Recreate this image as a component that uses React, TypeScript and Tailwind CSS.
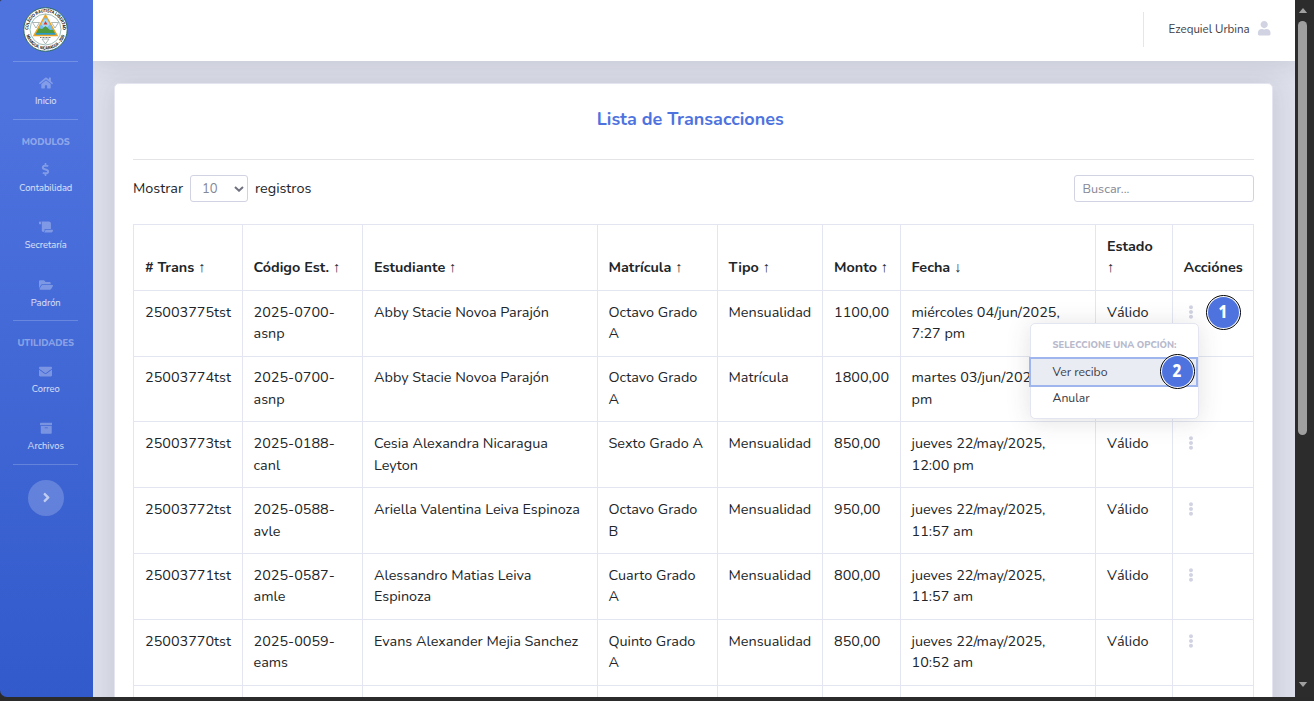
import React from "react";
import {
  FaHome,
  FaDollarSign,
  FaScroll,
  FaFolderOpen,
  FaEnvelope,
  FaArchive,
  FaAngleRight,
  FaUser,
  FaEllipsisV,
} from "react-icons/fa";

type Row = {
  id: string;
  code: [string, string];
  student: string[];
  grade: string[];
  type: string;
  amount: string;
  date: string[];
  height: string;
  text: string;
};

const rows: Row[] = [
  { id: "25003775tst", code: ["2025-0700-", "asnp"], student: ["Abby Stacie Novoa Parajón"], grade: ["Octavo Grado", "A"], type: "Mensualidad", amount: "1100,00", date: ["miércoles 04/jun/2025,", "7:27 pm"], height: "h-[66px]", text: "pt-[11px] leading-[21px]" },
  { id: "25003774tst", code: ["2025-0700-", "asnp"], student: ["Abby Stacie Novoa Parajón"], grade: ["Octavo Grado", "A"], type: "Matrícula", amount: "1800,00", date: ["martes 03/jun/202", "pm"], height: "h-[65px]", text: "pt-[9px] leading-[22px]" },
  { id: "25003773tst", code: ["2025-0188-", "canl"], student: ["Cesia Alexandra Nicaragua", "Leyton"], grade: ["Sexto Grado A"], type: "Mensualidad", amount: "850,00", date: ["jueves 22/may/2025,", "12:00 pm"], height: "h-[66px]", text: "pt-[10px] leading-[22px]" },
  { id: "25003772tst", code: ["2025-0588-", "avle"], student: ["Ariella Valentina Leiva Espinoza"], grade: ["Octavo Grado", "B"], type: "Mensualidad", amount: "950,00", date: ["jueves 22/may/2025,", "11:57 am"], height: "h-[66px]", text: "pt-[10px] leading-[22px]" },
  { id: "25003771tst", code: ["2025-0587-", "amle"], student: ["Alessandro Matias Leiva", "Espinoza"], grade: ["Cuarto Grado", "A"], type: "Mensualidad", amount: "800,00", date: ["jueves 22/may/2025,", "11:57 am"], height: "h-[66px]", text: "pt-[11px] leading-[21px]" },
  { id: "25003770tst", code: ["2025-0059-", "eams"], student: ["Evans Alexander Mejia Sanchez"], grade: ["Quinto Grado", "A"], type: "Mensualidad", amount: "850,00", date: ["jueves 22/may/2025,", "10:52 am"], height: "h-[66px]", text: "pt-[11px] leading-[21px]" },
];

const columns: { label: string; arrow: string; width: string; pad: string }[] = [
  { label: "# Trans", arrow: "↑", width: "w-[109px]", pad: "pl-[11px]" },
  { label: "Código Est.", arrow: "↑", width: "w-[120px]", pad: "pl-[10.5px]" },
  { label: "Estudiante", arrow: "↑", width: "w-[235px]", pad: "pl-[11px]" },
  { label: "Matrícula", arrow: "↑", width: "w-[120px]", pad: "pl-[10.5px]" },
  { label: "Tipo", arrow: "↑", width: "w-[105px]", pad: "pl-[10.5px]" },
  { label: "Monto", arrow: "↑", width: "w-[78px]", pad: "pl-[11px]" },
  { label: "Fecha", arrow: "↓", width: "w-[195px]", pad: "pl-[10.5px]" },
  { label: "Estado", arrow: "↑", width: "w-[77px]", pad: "pl-[11px]" },
  { label: "Acciónes", arrow: "", width: "w-[81px]", pad: "pl-[10.5px]" },
];

function Logo() {
  return (
    <svg viewBox="0 0 90 90" className="h-[45px] w-[45px]">
      <defs>
        <path id="ringTop" d="M 11.5 53 A 34.5 34.5 0 1 1 78.5 53" />
        <path id="ringBottom" d="M 6.5 56 A 40 40 0 0 0 83.5 56" />
        <clipPath id="triangle">
          <path d="M45 16 L68 57 H22 Z" />
        </clipPath>
      </defs>
      <circle cx="45" cy="45" r="43.5" fill="#fff" stroke="#2f6b5e" strokeWidth="2" />
      <circle cx="45" cy="45" r="31" fill="#fff" stroke="#5c8f85" strokeWidth="1.2" />
      <g fill="#000" fontFamily="Liberation Sans, sans-serif" fontWeight="700" fontSize="9">
        <text textAnchor="middle">
          <textPath href="#ringTop" startOffset="50%" textLength="110" lengthAdjust="spacingAndGlyphs">COLEGIO BAUTISTA LIBERTAD</textPath>
        </text>
        <text textAnchor="middle">
          <textPath href="#ringBottom" startOffset="50%" textLength="102" lengthAdjust="spacingAndGlyphs">MANAGUA, NICARAGUA - 2000</textPath>
        </text>
      </g>
      <g fill="none" stroke="#8a9a98" strokeWidth="1.4">
        <path d="M19 31 H33 L26 42 Z M57 31 H71 L64 42 Z M38 64 H52 L45 74 Z" />
      </g>
      <g clipPath="url(#triangle)">
        <rect x="20" y="14" width="50" height="44" fill="#74bdf0" />
        <path d="M36 34 A9 9 0 0 1 54 34 L49 40 H41 Z" fill="#a5d8f5" />
        <path d="M45 28 L49 35 H41 Z" fill="#d8352a" />
        <path d="M20 50 L30 42 L38 44 L45 38 L54 46 L70 44 V54 H20 Z" fill="#4d9b3e" />
        <rect x="20" y="52" width="50" height="6" fill="#2a9ac6" />
      </g>
      <path d="M45 16 L68 57 H22 Z" fill="none" stroke="#e9a528" strokeWidth="3" />
      <path d="M34 61 H56" stroke="#777" strokeWidth="2" strokeDasharray="2 1" />
    </svg>
  );
}

function Divider() {
  return <div className="mx-[13px] h-px w-[65px] shrink-0 bg-white/20" />;
}

function NavItem({ icon, label, className }: { icon: React.ReactNode; label: string; className: string }) {
  return (
    <a className={`flex w-[91.5px] shrink-0 flex-col items-center ${className}`}>
      <span className="flex h-[14px] items-center text-[14px] text-white/30">{icon}</span>
      <span className="mt-[4px] h-[13px] text-[9.36px] leading-[14px] text-white/80">{label}</span>
    </a>
  );
}

function NavHeading({ children, className }: { children: React.ReactNode; className: string }) {
  return (
    <div className={`h-[14px] w-[91.5px] shrink-0 text-center text-[9.36px] font-extrabold leading-[14px] text-white/40 ${className}`}>
      {children}
    </div>
  );
}

function Sidebar() {
  return (
    <nav className="h-[697px] w-[93px] shrink-0 overflow-hidden rounded-bl-[7px] rounded-tl-[2px]">
      <div className="flex h-[1065px] flex-col bg-linear-to-b from-[#4e73df] from-10% to-[#224abe]">
        <div className="mb-[9px] flex h-[52px] w-[91px] shrink-0 items-end justify-center">
          <Logo />
        </div>
        <Divider />
        <NavItem className="mt-[14px]" icon={<FaHome />} label="Inicio" />
        <div className="h-[12px] shrink-0" />
        <Divider />
        <NavHeading className="mt-[15px]">MODULOS</NavHeading>
        <NavItem className="mt-[14px]" icon={<FaDollarSign className="-mt-px text-[13px]" />} label="Contabilidad" />
        <NavItem className="mt-[26px]" icon={<FaScroll />} label="Secretaría" />
        <NavItem className="mt-[27px]" icon={<FaFolderOpen />} label="Padrón" />
        <div className="h-[11px] shrink-0" />
        <Divider />
        <NavHeading className="mt-[15px]">UTILIDADES</NavHeading>
        <NavItem className="mt-[14px]" icon={<FaEnvelope className="text-[13px]" />} label="Correo" />
        <NavItem className="mt-[26px]" icon={<FaArchive className="text-[12.5px]" />} label="Archivos" />
        <div className="h-[12px] shrink-0" />
        <Divider />
        <button className="ml-[28px] mt-[15px] flex h-9 w-9 shrink-0 items-center justify-center rounded-full bg-white/20 pb-[2px] pl-px text-white/60">
          <FaAngleRight className="text-[15px]" />
        </button>
      </div>
    </nav>
  );
}

function Topbar() {
  return (
    <header className="relative flex h-[61px] shrink-0 items-center justify-end bg-white pr-[24px] shadow-[0_2px_25px_0_rgba(58,59,69,0.15)]">
      <div className="mt-[-3px] h-[35px] w-px bg-[#e3e6f0]" />
      <span className="ml-[25px] mt-[-2px] w-[82px] whitespace-nowrap text-[11.52px] text-[#3a3b45]">Ezequiel Urbina</span>
      <FaUser className="ml-[6px] mt-[-4px] text-[14.4px] text-[#d1d3e2]" />
    </header>
  );
}

function Step({ n, className }: { n: number; className: string }) {
  return (
    <div className={`absolute z-20 flex h-[35px] w-[35px] items-center justify-center rounded-full border-[1.5px] border-black bg-white p-px ${className}`}>
      <div className="flex h-full w-full items-center justify-center rounded-full bg-[#4e73df] font-['Noto_Sans',sans-serif] text-[17px] font-extrabold text-white">
        <span className="scale-x-90">{n}</span>
      </div>
    </div>
  );
}

function ActionMenu() {
  return (
    <div className="absolute left-[-143px] top-[32px] z-10 h-[96px] w-[169px] rounded-[5px] border border-[#e3e6f0] bg-white pt-[14px] font-normal shadow-[0_2px_25px_0_rgba(58,59,69,0.15)]">
      <div className="h-[14px] whitespace-nowrap pl-[21.5px] text-[9.36px] font-extrabold leading-[14px] text-[#b7b9cc]">SELECCIONE UNA OPCIÓN:</div>
      <div className="ml-[-2.5px] mt-[5px] flex h-[30px] w-[169.5px] items-center border-2 border-[#9fb5ee] bg-[#eaecf4] pl-[22px] pt-px text-[12.24px] text-[#3a3b45]">
        Ver recibo
      </div>
      <div className="pl-[21.5px] text-[12.24px] leading-[23px] text-[#3a3b45]">Anular</div>
      <Step n={2} className="left-[128.5px] top-[29.5px]" />
    </div>
  );
}

function Lines({ lines }: { lines: string[] }) {
  return (
    <>
      {lines.map((line, i) => (
        <div key={i} className="whitespace-nowrap">{line}</div>
      ))}
    </>
  );
}

const border = "border border-[#e3e6f0]";

function TransactionsTable() {
  return (
    <table className="mt-[22px] w-[1121px] table-fixed border-collapse text-[14.4px] leading-[21.6px] text-[#212529]">
      <colgroup>
        {columns.map((c) => (
          <col key={c.label} className={c.width} />
        ))}
      </colgroup>
      <thead>
        <tr className="h-[66px]">
          {columns.map((c) => (
            <th key={c.label} className={`${border} ${c.pad} pb-[11px] text-left align-bottom font-bold whitespace-nowrap`}>
              {c.label}
              {c.label === "Estado" ? <br /> : " "}
              <span className="font-['Liberation_Sans',sans-serif] font-normal leading-none">{c.arrow}</span>
            </th>
          ))}
        </tr>
      </thead>
      <tbody>
        {rows.map((r, i) => {
          const cells = [[r.id], r.code, r.student, r.grade, [r.type], [r.amount], r.date, ["Válido"]];
          return (
            <tr key={r.id} className={r.height}>
              {cells.map((lines, c) => (
                <td key={c} className={`${border} ${columns[c].pad} ${r.text} align-top`}>
                  <Lines lines={lines} />
                </td>
              ))}
              <td className={`${border} p-0 align-top`}>
                <div className="relative h-[60px] pl-[11px] pt-[14px]">
                  <FaEllipsisV className="text-[14px] text-[#d1d3e2]" />
                  {i === 0 && <ActionMenu />}
                  {i === 0 && <Step n={1} className="left-[32.5px] top-[3.5px]" />}
                </div>
              </td>
            </tr>
          );
        })}
        <tr className="h-[66px]">
          {columns.map((c) => (
            <td key={c.label} className={border} />
          ))}
        </tr>
      </tbody>
    </table>
  );
}

function Scrollbar() {
  return (
    <div className="flex h-[697px] w-[19px] shrink-0 flex-col items-center bg-[#2c2c2c] pr-[4px]">
      <svg viewBox="0 0 10 6" className="mt-[8px] h-[5px] w-[10px] shrink-0"><path d="M5 0 L10 6 H0 Z" fill="#a0a0a0" /></svg>
      <div className="mt-[8px] h-[414px] w-[9px] shrink-0 rounded-full bg-[#9f9f9f]" />
      <svg viewBox="0 0 10 6" className="mb-[10px] mt-auto h-[5px] w-[10px] shrink-0"><path d="M0 0 H10 L5 6 Z" fill="#a0a0a0" /></svg>
    </div>
  );
}

export default function App() {
  return (
    <div className="h-[701px] w-[1314px] overflow-hidden bg-[#2b2b2b] font-[Nunito,Lato,sans-serif]">
      <div className="flex h-[697px] overflow-hidden">
        <Sidebar />
        <div className="flex h-[697px] w-[1202px] shrink-0 flex-col overflow-hidden bg-[#dddfeb]">
          <Topbar />
          <main className="ml-[21px] mt-[22px] h-[1000px] w-[1159px] shrink-0 rounded-[5px] border border-[#e3e6f0] bg-white pl-[18px] pr-[18px] shadow-[0_2px_25px_0_rgba(58,59,69,0.15)]">
            <h1 className="h-[75px] pr-[6.5px] pt-[22px] text-center text-[18px] font-bold leading-[26px] text-[#4e73df]">Lista de Transacciones</h1>
            <div className="h-px w-[1121px] bg-[#e4e4e6]" />
            <div className="mt-[15px] flex h-[27px] w-[1121px] items-center text-[14.4px] text-[#212529]">
              <span className="w-[57px]">Mostrar</span>
              <div className="flex h-[27px] w-[58px] items-center justify-between rounded-[3px] border border-[#d1d3e2] pl-[11px] pr-[3px] text-[13px] text-[#858796]">
                <span className="pt-[2px]">10</span>
                <svg viewBox="0 0 10 6" className="h-[6px] w-[10px]"><path d="M1 1 L5 4.7 L9 1" fill="none" stroke="#6e707e" strokeWidth="2" /></svg>
              </div>
              <span className="ml-[7px]">registros</span>
              <div className="ml-auto flex h-[27px] w-[180px] items-center rounded-[3px] border border-[#d1d3e2] pl-[7.5px] pt-px text-[12.6px] text-[#858796]">Buscar...</div>
            </div>
            <TransactionsTable />
          </main>
        </div>
        <Scrollbar />
      </div>
    </div>
  );
}
